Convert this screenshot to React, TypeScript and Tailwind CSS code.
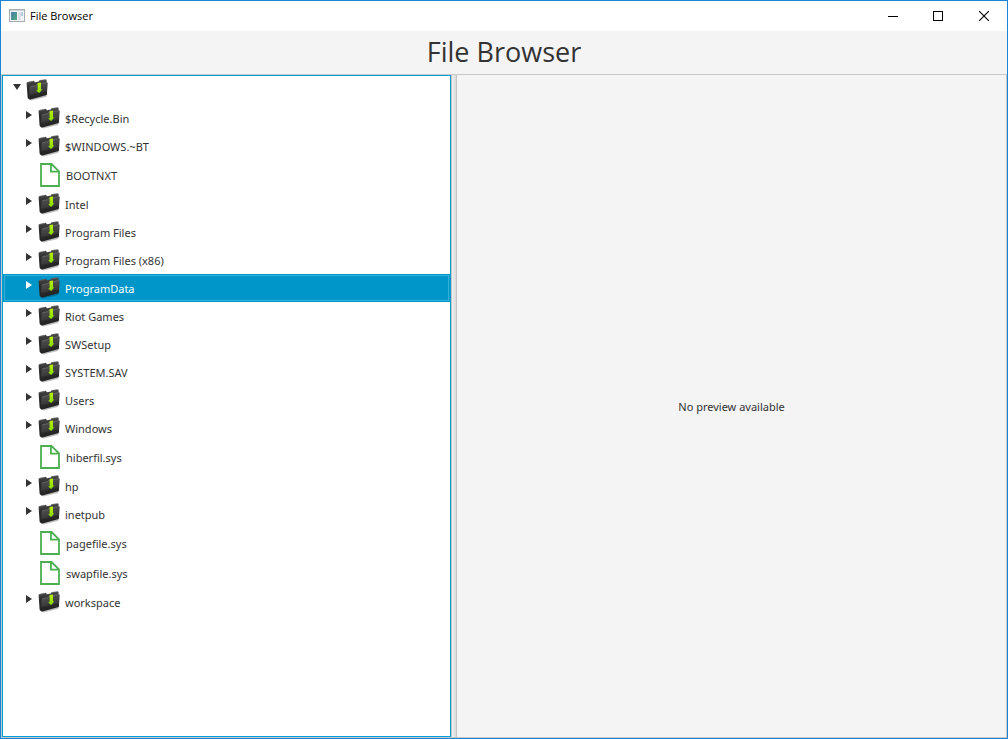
import { useState } from "react";

type Entry = { name: string; kind: "folder" | "file" };

const entries: Entry[] = [
  { name: "$Recycle.Bin", kind: "folder" },
  { name: "$WINDOWS.~BT", kind: "folder" },
  { name: "BOOTNXT", kind: "file" },
  { name: "Intel", kind: "folder" },
  { name: "Program Files", kind: "folder" },
  { name: "Program Files (x86)", kind: "folder" },
  { name: "ProgramData", kind: "folder" },
  { name: "Riot Games", kind: "folder" },
  { name: "SWSetup", kind: "folder" },
  { name: "SYSTEM.SAV", kind: "folder" },
  { name: "Users", kind: "folder" },
  { name: "Windows", kind: "folder" },
  { name: "hiberfil.sys", kind: "file" },
  { name: "hp", kind: "folder" },
  { name: "inetpub", kind: "folder" },
  { name: "pagefile.sys", kind: "file" },
  { name: "swapfile.sys", kind: "file" },
  { name: "workspace", kind: "folder" },
];

function IconDefs() {
  return (
    <svg width="0" height="0" className="absolute" aria-hidden="true">
      <defs>
        <linearGradient id="folderFront" x1="0" y1="0" x2="0.3" y2="1">
          <stop offset="0" stopColor="#565656" />
          <stop offset="0.5" stopColor="#424242" />
          <stop offset="1" stopColor="#262626" />
        </linearGradient>
        <linearGradient id="folderBack" x1="0" y1="0" x2="0" y2="1">
          <stop offset="0" stopColor="#4c4c4c" />
          <stop offset="0.4" stopColor="#2e2e2e" />
          <stop offset="1" stopColor="#222" />
        </linearGradient>
        <linearGradient id="arrow" x1="0" y1="0" x2="0" y2="1">
          <stop offset="0" stopColor="#b8f000" />
          <stop offset="1" stopColor="#86dc00" />
        </linearGradient>
      </defs>
    </svg>
  );
}

function FolderIcon() {
  return (
    <svg width="23" height="24" viewBox="0 0 23 24" className="shrink-0" aria-hidden="true">
      <path d="M3 20 L19 17.5 L22 15.6 L20 19 L5 22.4Z" fill="#000" opacity="0.25" />
      <path
        d="M0.6 5.2 Q0.6 4.1 1.7 3.9 L7 2.9 Q8 2.7 8.4 3.4 L9 4.3 L12.8 3.5 L13.6 2.3 L19.6 1.4 Q20.6 1.3 20.6 2.2 L20.8 16 L3.2 21 Q1.7 20.8 1.6 19.6Z"
        fill="url(#folderBack)"
      />
      <path d="M1.2 4.6 L7.4 3.2 M13.6 2.5 L20 1.6" stroke="#777" strokeWidth="0.5" fill="none" />
      <path
        d="M3.7 9.7 Q3.8 8.7 4.8 8.5 L9.6 7.5 L11 6.3 L20.4 4.4 Q21.7 4.2 21.7 5.3 L20.9 15.9 Q20.8 16.9 19.8 17.2 L4.1 21.5 Q2.9 21.7 2.8 20.6Z"
        fill="url(#folderFront)"
      />
      <path d="M3.9 9.4 Q4 8.8 4.8 8.6 L9.6 7.6 L11 6.5 L20.8 4.6" fill="none" stroke="#747474" strokeWidth="0.6" />
      <path d="M3.2 17 L21 13.2 L20.9 15.9 Q20.8 16.9 19.8 17.2 L4.1 21.5 Q2.9 21.7 2.8 20.6Z" fill="#111" opacity="0.3" />
      <path d="M11.6 5.1 L15 4.6 L15 11.6 L16.4 11.3 L13.2 15.1 L10 12.6 L11.6 12.3Z" fill="url(#arrow)" />
    </svg>
  );
}

function FileIcon() {
  return (
    <svg width="24" height="24" viewBox="0 0 24 24" className="shrink-0" aria-hidden="true">
      <path
        d="M3 1 H13.5 L21 8.3 V23 H3Z M12.9 1 V8.6 H21"
        fill="none"
        stroke="#4caf50"
        strokeWidth="1.8"
      />
    </svg>
  );
}

function Disclosure({ open, light }: { open?: boolean; light?: boolean }) {
  return (
    <svg width="10" height="10" viewBox="0 0 10 10" fill={light ? "#fff" : "#333"} aria-hidden="true">
      {open ? <path d="M1 2 H9 L5 8Z" /> : <path d="M2 1 L8 5 L2 9Z" />}
    </svg>
  );
}

function AppIcon() {
  return (
    <svg width="16" height="14" viewBox="0 0 16 14" aria-hidden="true">
      <defs>
        <linearGradient id="appPane" x1="0" y1="0" x2="1" y2="1">
          <stop offset="0" stopColor="#4a7fb0" />
          <stop offset="1" stopColor="#4fa878" />
        </linearGradient>
      </defs>
      <rect x="0.5" y="0.5" width="15" height="12" fill="#f2f4f6" stroke="#a9adb1" />
      <path d="M1 1.5 H15" stroke="#cfd4da" />
      <rect x="2" y="3" width="6" height="8" fill="url(#appPane)" />
      <rect x="9" y="3" width="3" height="8" fill="#dde1e6" />
      <rect x="12" y="3" width="2" height="4" fill="#b3cfdc" />
    </svg>
  );
}

function TreeRow({ entry, selected, onSelect }: { entry: Entry; selected: boolean; onSelect: () => void }) {
  const folder = entry.kind === "folder";
  return (
    <li
      role="treeitem"
      aria-selected={selected}
      onClick={onSelect}
      className={`flex items-center pl-[21px] ${folder ? "h-7" : "h-[30px]"} ${
        selected ? "bg-[#0096c9] text-white outline outline-1 -outline-offset-2 outline-[#38afd6]" : ""
      }`}
    >
      <span className="flex w-[14px] self-stretch pt-1.5">
        {folder && (
          <button type="button" aria-label={`Expand ${entry.name}`} className="h-[10px] w-[10px]">
            <Disclosure light={selected} />
          </button>
        )}
      </span>
      {folder ? <FolderIcon /> : <FileIcon />}
      <span className="pt-0.5 pl-1">{entry.name}</span>
    </li>
  );
}

export default function App() {
  const [selected, setSelected] = useState("ProgramData");
  return (
    <div className="flex h-screen flex-col border border-[#1883d7] bg-[#f4f4f4] font-['Noto_Sans','Open_Sans',sans-serif] text-[11px] leading-4 text-[#333]">
      <IconDefs />
      <header className="flex h-[30px] shrink-0 items-center bg-white pl-2">
        <AppIcon />
        <span className="pl-[5px] font-['Open_Sans',sans-serif] text-black">File Browser</span>
        <div className="ml-auto flex self-stretch text-black">
          <button type="button" aria-label="Minimize" className="flex w-[45px] items-center justify-center">
            <svg width="10" height="10" viewBox="0 0 10 10" stroke="currentColor" shapeRendering="crispEdges">
              <path d="M0 5.5 H10" />
            </svg>
          </button>
          <button type="button" aria-label="Maximize" className="flex w-[46px] items-center justify-center">
            <svg width="10" height="10" viewBox="0 0 10 10" fill="none" stroke="currentColor" shapeRendering="crispEdges">
              <rect x="0.5" y="0.5" width="9" height="9" />
            </svg>
          </button>
          <button type="button" aria-label="Close" className="flex w-[46px] items-center justify-center">
            <svg width="10" height="10" viewBox="0 0 10 10" stroke="currentColor" strokeWidth="1.1">
              <path d="M0 0 L10 10 M10 0 L0 10" />
            </svg>
          </button>
        </div>
      </header>
      <h1 className="flex h-[43px] shrink-0 items-center justify-center pb-0.5 font-['Open_Sans',sans-serif] text-[27px] leading-10">
        File Browser
      </h1>
      <main className="flex min-h-0 flex-1 border border-[#c8c8c8]">
        <ul role="tree" aria-label="Files" className="w-[449px] shrink-0 overflow-auto border border-[#039ed3] bg-white">
          <li role="treeitem" aria-expanded="true">
            <div className="flex h-7 items-center pl-[9px]">
              <span className="flex w-[14px] self-stretch pt-1.5">
                <button type="button" aria-label="Collapse root" className="h-[10px] w-[10px]">
                  <Disclosure open />
                </button>
              </span>
              <FolderIcon />
            </div>
            <ul role="group">
              {entries.map((entry) => (
                <TreeRow
                  key={entry.name}
                  entry={entry}
                  selected={entry.name === selected}
                  onSelect={() => setSelected(entry.name)}
                />
              ))}
            </ul>
          </li>
        </ul>
        <div
          role="separator"
          aria-orientation="vertical"
          className="w-[6px] shrink-0 cursor-col-resize border-x border-[#c4c4c4] bg-linear-to-r from-[#f0f0f0] to-[#dadada]"
        />
        <section aria-label="Preview" className="flex flex-1 items-center justify-center">
          <p className="pt-0.5">No preview available</p>
        </section>
      </main>
    </div>
  );
}
